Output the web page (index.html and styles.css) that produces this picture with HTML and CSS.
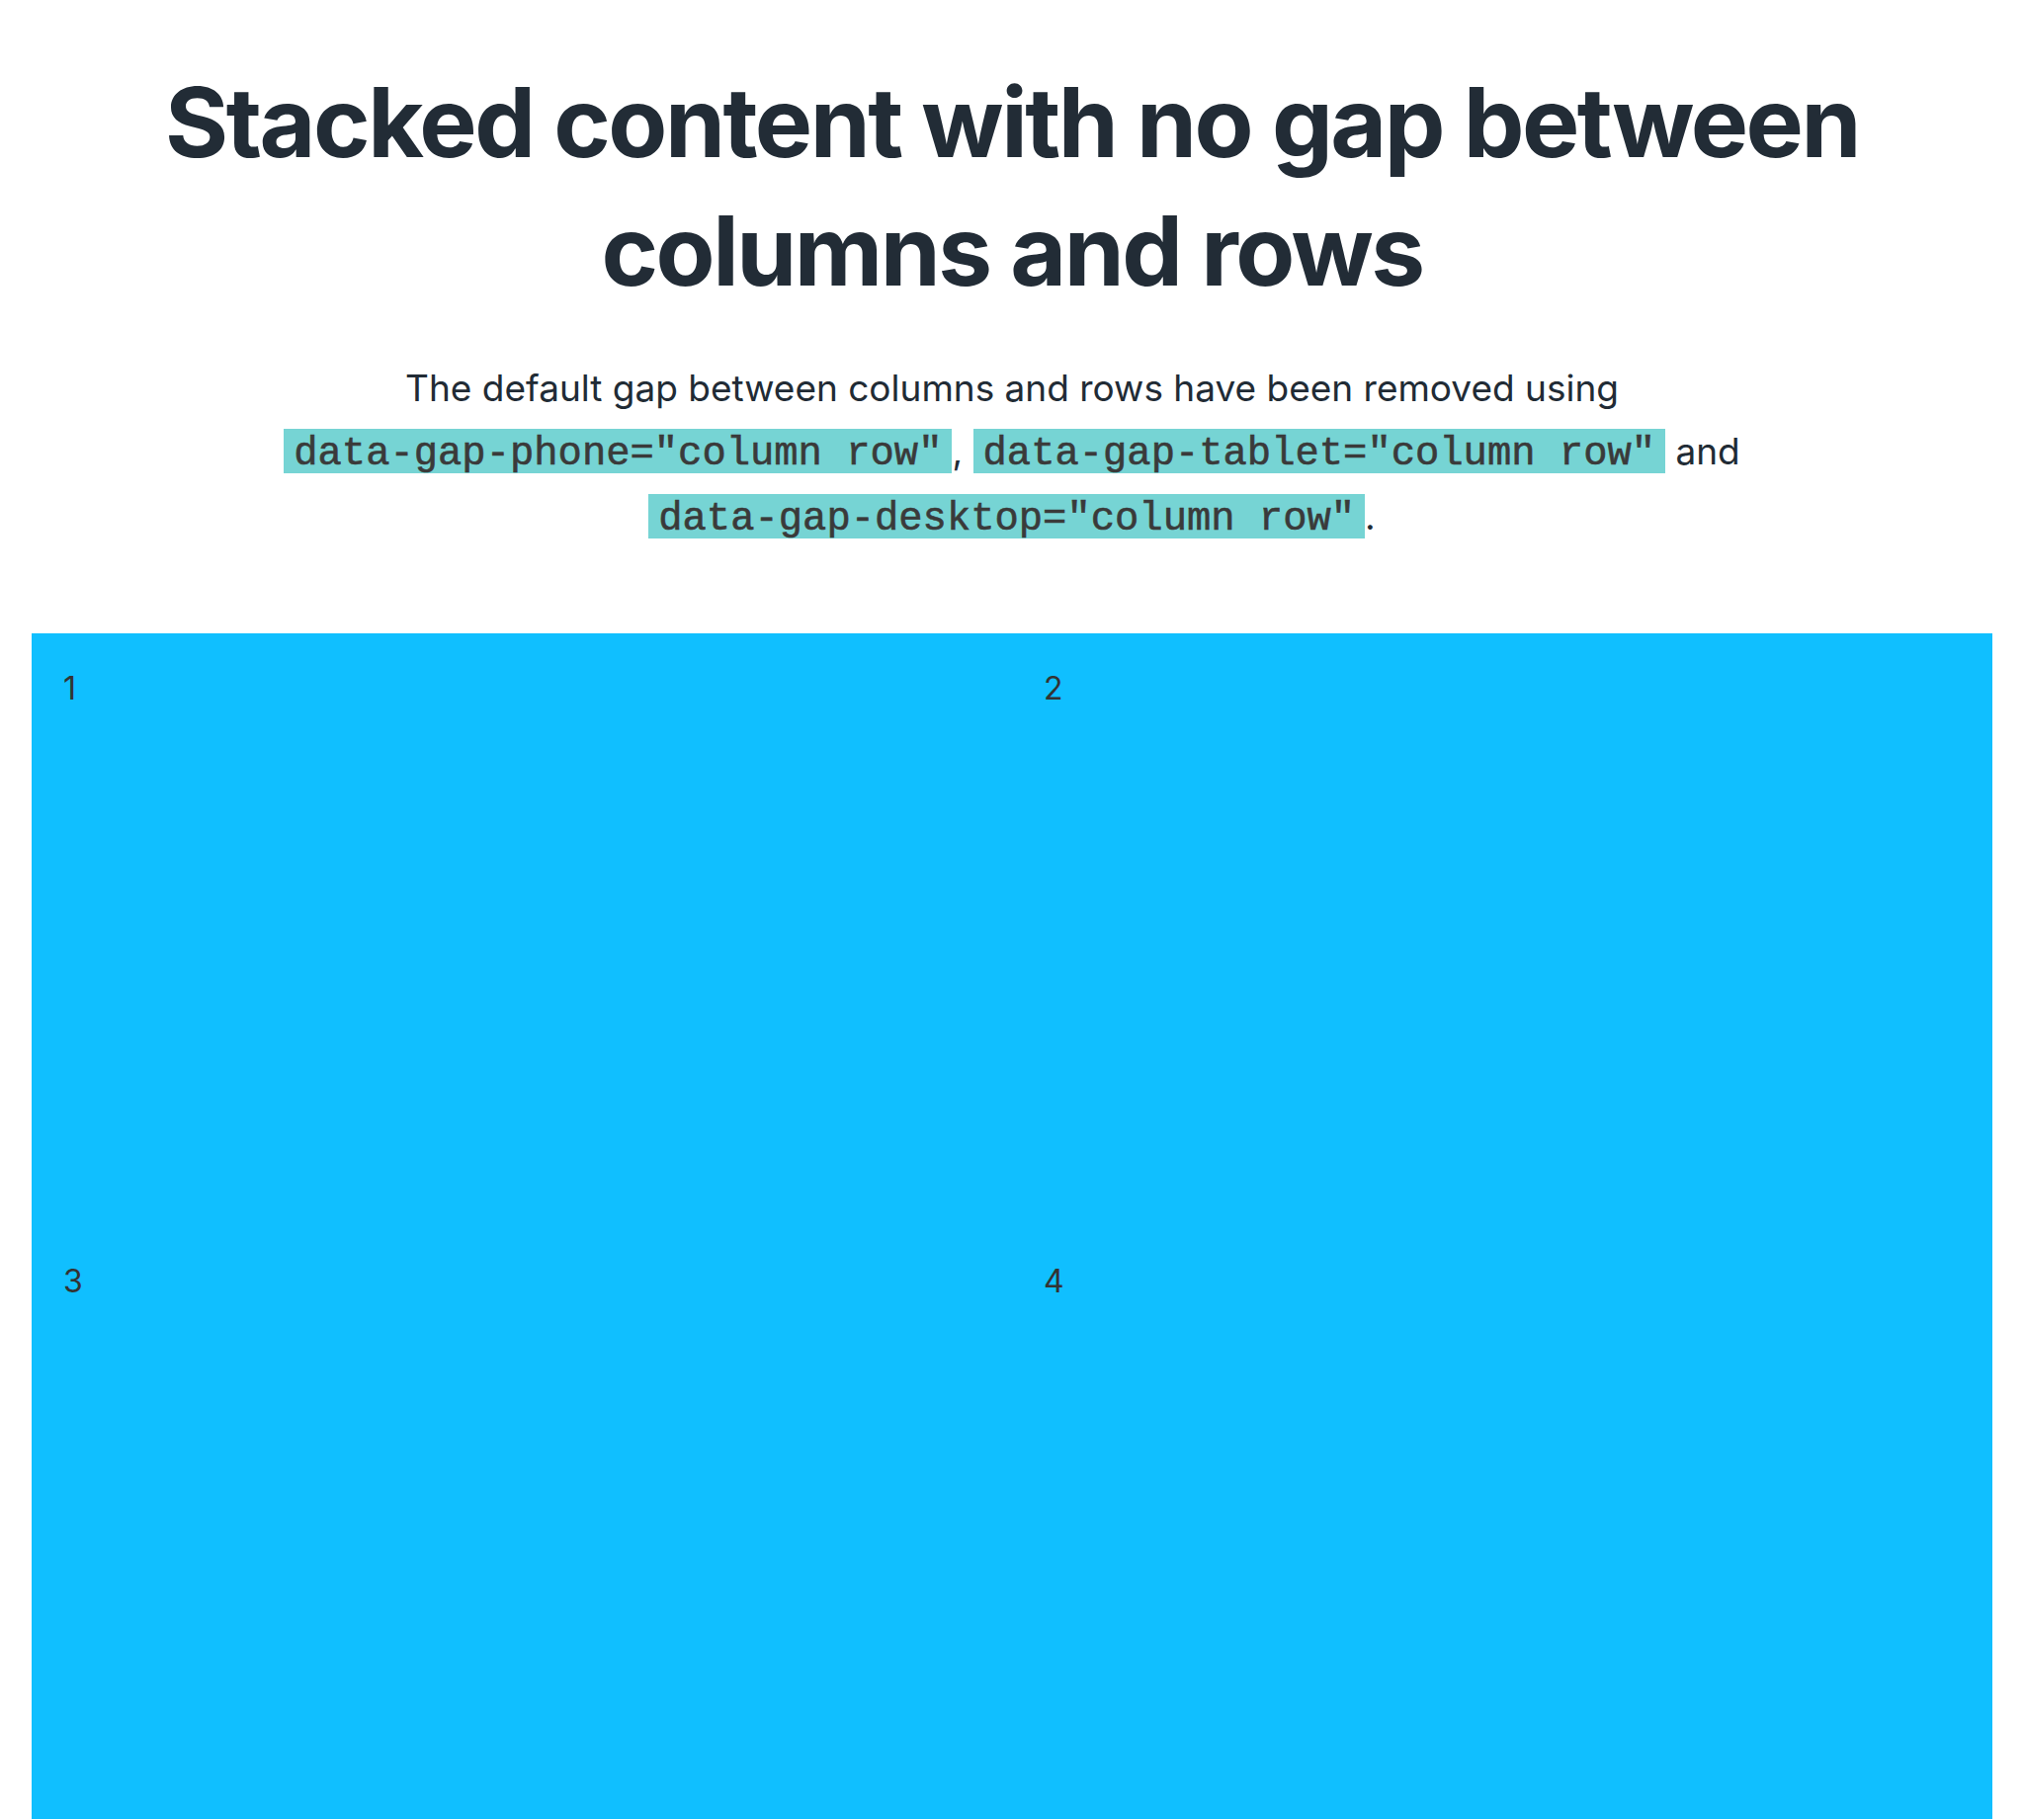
FILE: index.html
```html
<!DOCTYPE html>
<html lang="en">
<head>
<meta charset="utf-8">
<title>Stacked content with no gap between columns and rows</title>
<link rel="stylesheet" href="styles.css">
</head>
<body>
<header class="intro">
  <h1 class="title">Stacked content with no gap between columns and rows</h1>
  <p class="lead">The default gap between columns and rows have been removed using <code class="code">data-gap-phone="column row"</code>, <code class="code">data-gap-tablet="column row"</code> and <code class="code">data-gap-desktop="column row"</code>.</p>
</header>
<main class="grid">
  <div class="cell">1</div>
  <div class="cell">2</div>
  <div class="cell">3</div>
  <div class="cell">4</div>
</main>
</body>
</html>
```

FILE: styles.css
```css
html, body {
  margin: 0;
  padding: 0;
  background: #ffffff;
}
body {
  font-family: Inter, "Noto Sans", sans-serif;
  color: #212b35;
  padding: 0 32px;
}
.intro {
  max-width: 1780px;
  margin: 0 auto;
  text-align: center;
  padding-top: 59px;
}
.title {
  margin: 0;
  font-size: 98px;
  line-height: 130px;
  font-weight: 700;
  letter-spacing: -2.5px;
  color: #222c36;
}
.lead {
  margin: 42px 0 0;
  font-size: 37px;
  line-height: 64px;
  color: #212b35;
}
.code {
  font-family: "Liberation Mono", "Courier New", monospace;
  font-size: 40.5px;
  background: linear-gradient(#76d4d4, #76d4d4) no-repeat top left / 100% calc(100% - 3px);
  color: #3a3a3a;
  padding: 2px 10px 0;
  white-space: nowrap;
  -webkit-text-stroke: 0.6px #3a3a3a;
}
.grid {
  margin-top: 84px;
  display: grid;
  grid-template-columns: 1fr 1fr;
  gap: 0;
  background: #10bfff;
}
.cell {
  min-height: 600px;
  box-sizing: border-box;
  padding: 32px;
  font-size: 32px;
  line-height: 48px;
  color: #333333;
}
```
